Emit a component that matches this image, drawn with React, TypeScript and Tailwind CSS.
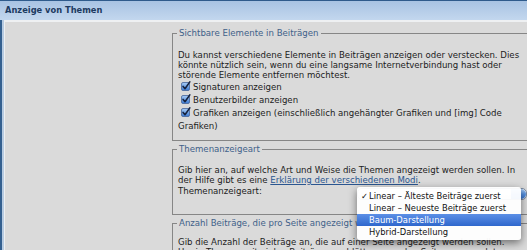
import React from 'react'

const themeModes = [
  'Linear – Älteste Beiträge zuerst',
  'Linear – Neueste Beiträge zuerst',
  'Baum-Darstellung',
  'Hybrid-Darstellung',
]

function Checkbox() {
  return (
    <svg width="10" height="10" viewBox="0 0 10 10" className="inline-block align-[-1px] ml-[3px] mr-[2px]">
      <defs>
        <linearGradient id="cbfill" x1="0" y1="0" x2="0" y2="1">
          <stop offset="0" stopColor="#a9cdf6" />
          <stop offset="1" stopColor="#3b7ad4" />
        </linearGradient>
      </defs>
      <rect x="0.5" y="1.5" width="8" height="8" rx="1.5" fill="url(#cbfill)" stroke="#45649a" strokeWidth="0.8" />
      <path d="M2.1 5.4 L4 7.7 L8.8 0.9" fill="none" stroke="#16233f" strokeWidth="1.6" strokeLinecap="round" strokeLinejoin="round" />
    </svg>
  )
}

export default function App() {
  return (
    <div className="relative w-[527px] h-[250px] overflow-hidden bg-[#dadada] font-['DejaVu_Sans',sans-serif] text-[8.6px] text-[#1c1c1c]">
      {/* Title bar */}
      <div className="h-[20px] border-t border-[#2f5b8c] bg-gradient-to-b from-[#a8c3e3] to-[#c3d7ee] px-[5px] flex items-center">
        <h1 className="text-[8.3px] font-bold leading-none text-[#1d3a60]">Anzeige von Themen</h1>
      </div>

      <div className="h-full border-l-2 border-[#34608f]">
        <div className="h-full border-l-2 border-[#b7cbe1]">
          <div className="h-full flex border-l border-t-2 border-[#eef0f2]">
            <div className="w-[167px] shrink-0" />

            <div className="flex-1 min-w-0">
              {/* Sichtbare Elemente */}
              <fieldset className="mt-[6px] w-[380px] border border-[#868686] pl-[5px] pr-[5px] pt-[12px] pb-[7px]">
                <legend className="-ml-[1px] px-[2px] leading-[10px] text-[#3f6189]">Sichtbare Elemente in Beiträgen</legend>
                <p className="leading-[10px] whitespace-nowrap">
                  Du kannst verschiedene Elemente in Beiträgen anzeigen oder verstecken. Dies
                  <br />
                  könnte nützlich sein, wenn du eine langsame Internetverbindung hast oder
                  <br />
                  störende Elemente entfernen möchtest.
                </p>
                <div className="mt-[1px] leading-[13px] whitespace-nowrap">
                  <label className="block"><Checkbox />Signaturen anzeigen</label>
                  <label className="block"><Checkbox />Benutzerbilder anzeigen</label>
                  <label className="block">
                    <Checkbox />Grafiken anzeigen (einschließlich angehängter Grafiken und [img] Code
                    <br />
                    Grafiken)
                  </label>
                </div>
              </fieldset>

              {/* Themenanzeigeart */}
              <fieldset className="mt-[3px] w-[380px] border border-[#868686] pl-[5px] pr-[5px] pt-[11px] pb-[14px]">
                <legend className="-ml-[1px] px-[2px] leading-[10px] text-[#3f6189]">Themenanzeigeart</legend>
                <p className="leading-[10px] whitespace-nowrap">
                  Gib hier an, auf welche Art und Weise die Themen angezeigt werden sollen. In
                  <br />
                  der Hilfe gibt es eine <a className="text-[#2b5690] underline">Erklärung der verschiedenen Modi</a>.
                </p>
                <div className="flex items-start">
                  <span className="pt-[1px] leading-[10px]">Themenanzeigeart:</span>
                  <div className="ml-[95px] mt-[3px] h-[12px] w-[170px] shrink-0 flex justify-end rounded-[5px] border border-[#7b8aa0] bg-gradient-to-b from-white to-[#e4e4e4]">
                    <div className="w-[15px] rounded-r-[5px] bg-gradient-to-b from-[#a7caf3] via-[#5a94e2] to-[#3a78d4]" />
                  </div>
                </div>
              </fieldset>

              {/* Anzahl Beiträge */}
              <fieldset className="mt-[3px] w-[380px] border border-[#868686] pl-[5px] pr-[5px] pt-[9px] pb-[10px]">
                <legend className="-ml-[1px] px-[2px] leading-[10px] text-[#3f6189]">Anzahl Beiträge, die pro Seite angezeigt werden sollen</legend>
                <p className="leading-[10px] whitespace-nowrap">
                  Gib die Anzahl der Beiträge an, die auf einer Seite angezeigt werden sollen.
                  <br />
                  Um in Themen mit vielen Beiträgen zu blättern, werden Seiten verwendet.
                </p>
              </fieldset>
            </div>
          </div>
        </div>
      </div>

      {/* Open select menu */}
      <div className="absolute left-[357px] top-[187px] w-[164px] pt-[3px] pb-[2px] rounded-[3px] bg-white/95 shadow-[0_3px_9px_rgba(0,0,0,0.5)] text-[8.4px] text-[#111]">
        {themeModes.map((mode, i) => (
          <div
            key={mode}
            className={
              i === 2
                ? 'relative h-[12px] pl-[12px] flex items-center whitespace-nowrap bg-gradient-to-b from-[#5b8fe6] to-[#2f67cc] text-white'
                : 'relative h-[12px] pl-[12px] flex items-center whitespace-nowrap'
            }
          >
            {i === 0 && <span className="absolute left-[4px]">✓</span>}
            {mode}
          </div>
        ))}
      </div>
    </div>
  )
}
